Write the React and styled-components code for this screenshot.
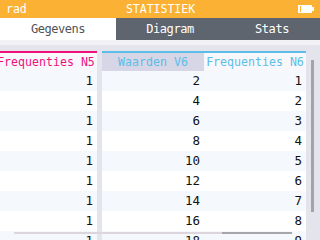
import React from "react";
import styled, { createGlobalStyle } from "styled-components";

const GlobalStyle = createGlobalStyle`
  html, body { margin: 0; padding: 0; background: #ffffff; }
  body { font-family: "DejaVu Sans Mono", monospace; }
`;

const Screen = styled.div`
  width: 320px;
  height: 240px;
  overflow: hidden;
  display: flex;
  flex-direction: column;
  font-family: "DejaVu Sans Mono", monospace;
`;

const TopBar = styled.div`
  height: 18px;
  flex: none;
  background: #fbb134;
  color: #ffffff;
  display: grid;
  grid-template-columns: 1fr auto 1fr;
  align-items: center;
  padding: 0 5px 0 6px;
  font-size: 11.5px;
`;

const Mode = styled.span`
  justify-self: start;
`;

const Title = styled.span`
  justify-self: center;
`;

const Battery = styled.svg`
  justify-self: end;
  display: block;
`;

const TabBar = styled.div`
  height: 22px;
  flex: none;
  background: #5e656e;
  display: flex;
`;

const Tab = styled.div`
  flex: ${(p) => p.$grow} 1 0;
  text-align: center;
  line-height: 22px;
  font-size: 12px;
  letter-spacing: -0.45px;
  color: ${(p) => (p.$active ? "#505358" : "#ffffff")};
  background: ${(p) => (p.$active ? "#ffffff" : "transparent")};
`;

const Strip = styled.div`
  height: 5px;
  flex: none;
  background: #f3f3f7;
`;

const Body = styled.div`
  flex: 1;
  position: relative;
  display: flex;
  background: #e4e4ec;
  padding-top: 6px;
  overflow: hidden;
`;

const Viewport = styled.div`
  width: 306px;
  flex: none;
  overflow: hidden;
`;

const Table = styled.div`
  display: flex;
  margin-left: -5px;
`;

const Column = styled.div`
  width: 102px;
  flex: none;
  margin-right: ${(p) => (p.$gap ? "5px" : "0")};
  display: flex;
  flex-direction: column;
`;

const Header = styled.div`
  height: 18px;
  border-top: 2px solid ${(p) => p.$color};
  background: ${(p) => p.$bg};
  color: ${(p) => p.$color};
  font-size: 11.6px;
  line-height: 18px;
  text-align: center;
  white-space: nowrap;
  overflow: visible;
`;

const Cell = styled.div`
  height: 20px;
  line-height: 20px;
  background: ${(p) => (p.$odd ? "#f5f8fd" : "#ffffff")};
  text-align: right;
  padding-right: 4px;
  font-size: 12.5px;
  color: #111111;
`;

const Rail = styled.div`
  flex: 1;
  position: relative;
`;

const VThumb = styled.div`
  position: absolute;
  left: 5px;
  top: 9px;
  width: 3px;
  height: 152px;
  background: #a3a3a8;
`;

const HTrack = styled.div`
  position: absolute;
  left: 14px;
  width: 278px;
  bottom: 6px;
  height: 2px;
  background: #dcd6dc;
`;

const HThumb = styled.div`
  position: absolute;
  right: 0;
  top: 0;
  width: 70px;
  height: 2px;
  background: #a6a6aa;
`;

const rows = 9;
const columns = [
  {
    title: "Frequenties N5",
    color: "#ef107c",
    bg: "#f8f8fc",
    gap: true,
    values: Array.from({ length: rows }, () => 1),
  },
  {
    title: "Waarden V6",
    color: "#5bbde8",
    bg: "#d6d6e6",
    values: Array.from({ length: rows }, (_, i) => (i + 1) * 2),
  },
  {
    title: "Frequenties N6",
    color: "#5bbde8",
    bg: "#f8f8fc",
    values: Array.from({ length: rows }, (_, i) => i + 1),
  },
];

export default function App() {
  return (
    <Screen>
      <GlobalStyle />
      <TopBar>
        <Mode>rad</Mode>
        <Title>STATISTIEK</Title>
        <Battery width="17" height="9" viewBox="0 0 17 9">
          <rect x="0.5" y="0.5" width="13" height="7" fill="none" stroke="#fff" />
          <rect x="3" y="1" width="10" height="6" fill="#fff" />
          <rect x="1" y="1" width="1" height="6" fill="#fff" />
          <rect x="14" y="2" width="2" height="4" fill="#fff" />
        </Battery>
      </TopBar>
      <TabBar>
        <Tab $active $grow={116}>Gegevens</Tab>
        <Tab $grow={108}>Diagram</Tab>
        <Tab $grow={96}>Stats</Tab>
      </TabBar>
      <Strip />
      <Body>
        <Viewport>
          <Table>
            {columns.map((c) => (
              <Column key={c.title} $gap={c.gap}>
                <Header $color={c.color} $bg={c.bg}>
                  {c.title}
                </Header>
                {c.values.map((v, i) => (
                  <Cell key={i} $odd={i % 2 === 0}>
                    {v}
                  </Cell>
                ))}
              </Column>
            ))}
          </Table>
        </Viewport>
        <Rail>
          <VThumb />
        </Rail>
        <HTrack>
          <HThumb />
        </HTrack>
      </Body>
    </Screen>
  );
}
